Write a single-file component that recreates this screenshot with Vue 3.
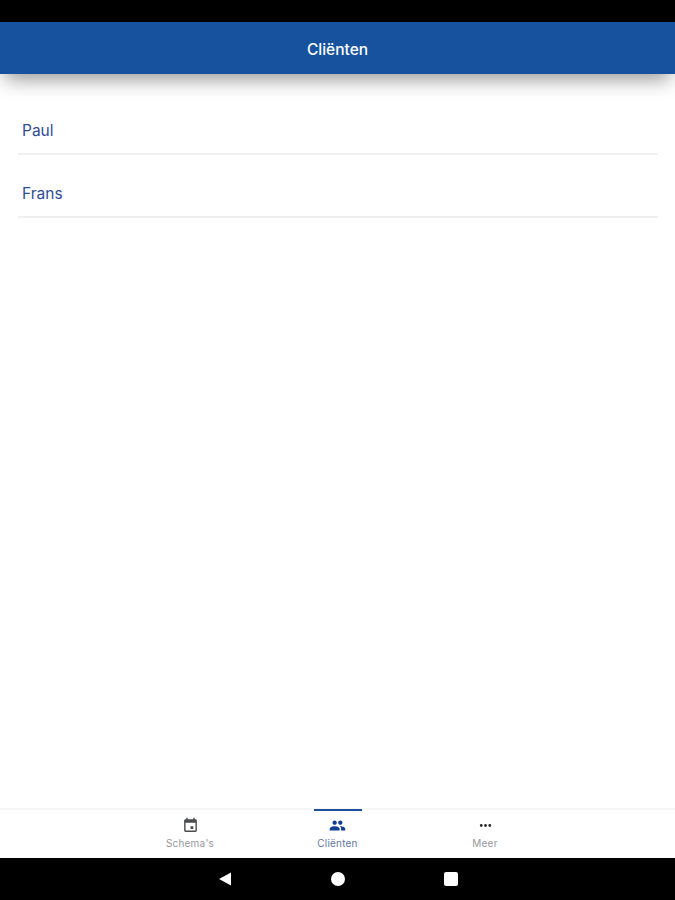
<script setup>
const clients = ['Paul', 'Frans']
</script>

<template>
  <div class="screen">
    <div class="status"></div>
    <header class="appbar">Cliënten</header>
    <main class="list">
      <div v-for="c in clients" :key="c" class="row">{{ c }}</div>
    </main>
    <nav class="tabs">
      <div class="tab">
        <svg class="ico" viewBox="0 0 24 24" fill="#4a4b50"><path d="M19 3h-1V1h-2v2H8V1H6v2H5c-1.1 0-2 .9-2 2v14c0 1.1.9 2 2 2h14c1.1 0 2-.9 2-2V5c0-1.1-.9-2-2-2zm0 16H5V8h14v11zm-7-6h4v4h-4z"/></svg>
        <span class="lbl">Schema's</span>
      </div>
      <div class="tab active">
        <span class="ind"></span>
        <svg class="ico" viewBox="0 0 24 24" fill="#123f94"><path d="M16 11c1.66 0 2.99-1.34 2.99-3S17.66 5 16 5s-3 1.34-3 3 1.34 3 3 3zm-8 0c1.66 0 2.99-1.34 2.99-3S9.66 5 8 5 5 6.34 5 8s1.34 3 3 3zm0 2c-2.33 0-7 1.17-7 3.5V19h14v-2.5C15 14.17 10.33 13 8 13zm8 0c-.29 0-.62.02-.97.05 1.16.84 1.97 1.97 1.97 3.45V19h6v-2.5c0-2.33-4.67-3.5-7-3.5z"/></svg>
        <span class="lbl">Cliënten</span>
      </div>
      <div class="tab">
        <svg class="ico" viewBox="0 0 24 24" fill="#2c2c30"><path d="M6 10c-1.1 0-2 .9-2 2s.9 2 2 2 2-.9 2-2-.9-2-2-2zm12 0c-1.1 0-2 .9-2 2s.9 2 2 2 2-.9 2-2-.9-2-2-2zm-6 0c-1.1 0-2 .9-2 2s.9 2 2 2 2-.9 2-2-.9-2-2-2z"/></svg>
        <span class="lbl">Meer</span>
      </div>
    </nav>
    <div class="sysnav">
      <svg class="sys" viewBox="0 0 14 14" fill="#fff"><path d="M13 0.5v13L1 7z"/></svg>
      <span class="circle"></span>
      <span class="square"></span>
    </div>
  </div>
</template>

<style scoped>
.screen {
  width: 675px;
  height: 900px;
  display: flex;
  flex-direction: column;
  background: #fff;
  font-family: Inter, "Open Sans", sans-serif;
  overflow: hidden;
}
.status { height: 22px; background: #000; flex: none; }
.appbar {
  height: 52px;
  flex: none;
  background: #17529f;
  color: #fff;
  display: flex;
  align-items: center;
  justify-content: center;
  font-size: 15.5px;
  font-weight: 500;
  padding-top: 3px;
  box-sizing: border-box;
  box-shadow: 0 10px 20px -5px rgba(0, 0, 0, 0.42);
  position: relative;
}
.list {
  flex: 1;
  padding: 18px 17px 0 18px;
}
.row {
  height: 63px;
  box-sizing: border-box;
  border-bottom: 2px solid #f0f0f0;
  padding: 30px 0 0 4px;
  color: #2f4c96;
  font-size: 15.5px;
  line-height: 18px;
}
.tabs {
  height: 50px;
  flex: none;
  box-sizing: border-box;
  border-top: 2px solid #f6f6f6;
  display: grid;
  grid-template-columns: repeat(3, 147.5px);
  justify-content: center;
  background: #fff;
}
.tab {
  position: relative;
  display: flex;
  flex-direction: column;
  align-items: center;
  padding-top: 7px;
  color: #97979b;
}
.tab.active { color: #64779f; }
.ind {
  position: absolute;
  top: -1px;
  left: 50%;
  width: 48px;
  margin-left: -24px;
  height: 2px;
  background: #1c4f9c;
}
.ico { width: 17px; height: 17px; display: block; }
.lbl { font-size: 10px; line-height: 12px; margin-top: 3px; letter-spacing: 0.2px; }
.sysnav {
  height: 42px;
  flex: none;
  background: #000;
  display: grid;
  grid-template-columns: repeat(3, 113px);
  justify-content: center;
  justify-items: center;
  align-items: center;
}
.sys { width: 14px; height: 14px; }
.circle { width: 14px; height: 14px; border-radius: 50%; background: #fff; }
.square { width: 14px; height: 14px; border-radius: 2px; background: #fff; }
</style>
